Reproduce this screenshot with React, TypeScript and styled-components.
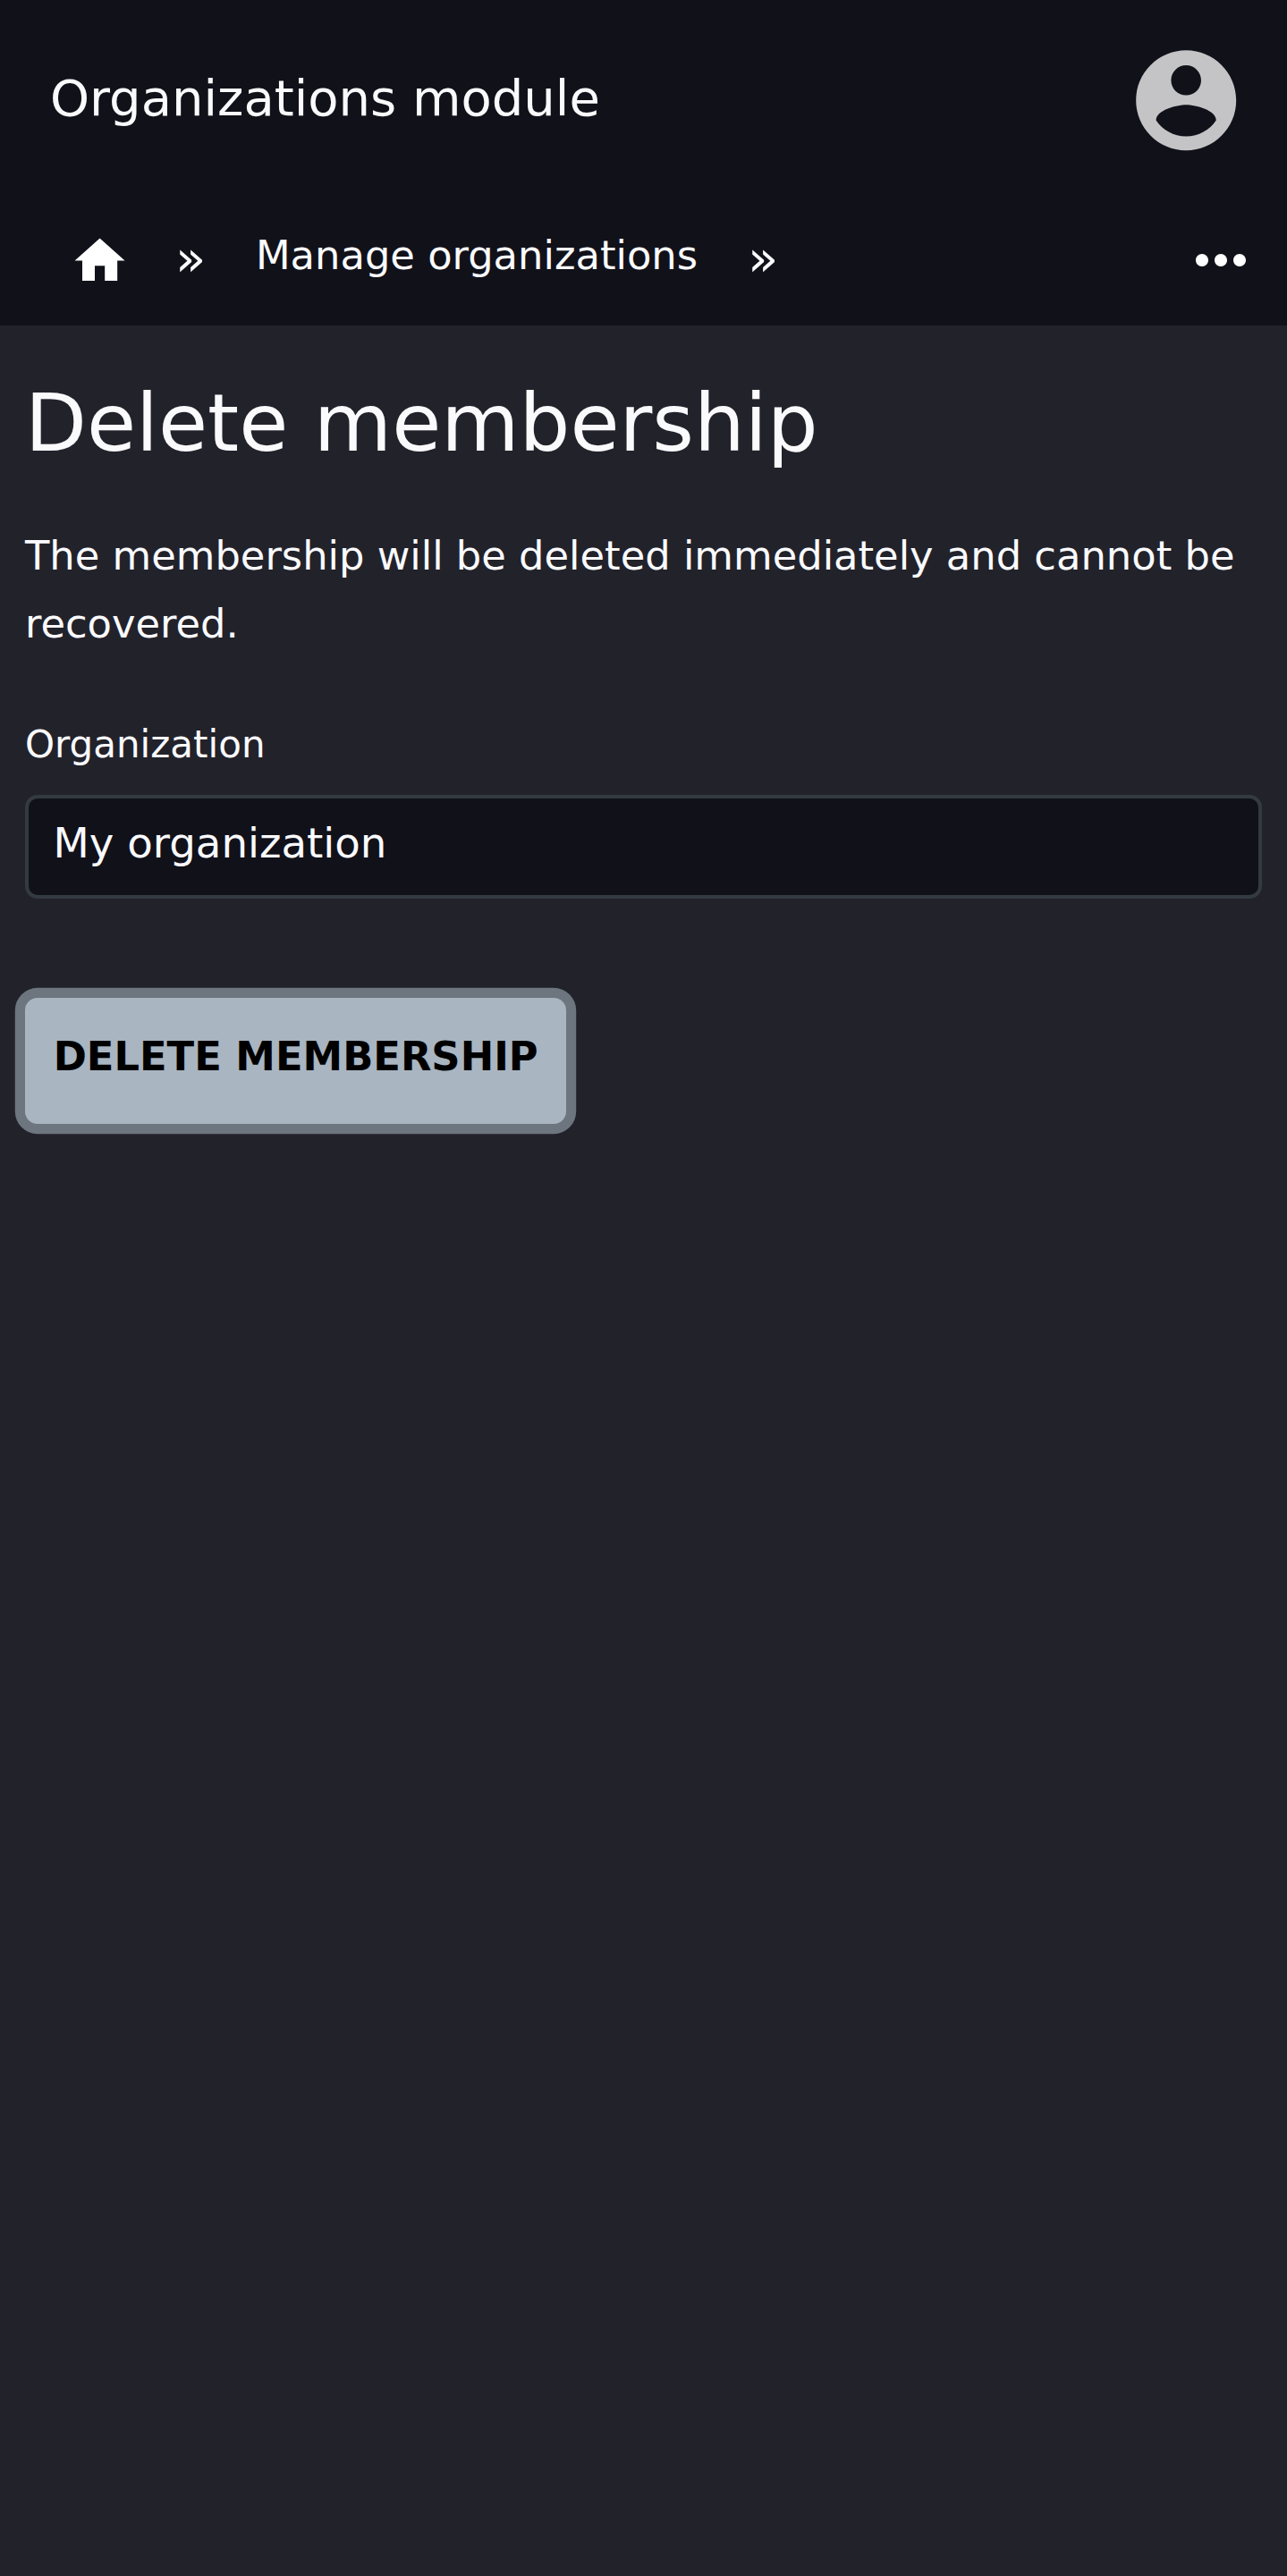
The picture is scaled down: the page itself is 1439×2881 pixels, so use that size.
import React from 'react';
import styled, { createGlobalStyle } from 'styled-components';

const GlobalStyle = createGlobalStyle`
  *, *::before, *::after { box-sizing: border-box; }
  html, body { margin: 0; background: #22222b; }
  body { color: #fafafd; font-family: 'DejaVu Sans', sans-serif; font-size: 44.8px; line-height: 76.8px; }
`;

const Page = styled.div`
  min-height: 2881px;
  display: flex;
  flex-direction: column;
`;

const Header = styled.header`
  height: 364px;
  background: #11111a;
  display: flex;
  flex-direction: column;
`;

const TitleBar = styled.div`
  height: 224px;
  padding: 0 45.2px 0 56px;
  display: flex;
  align-items: center;
  justify-content: space-between;
`;

const ModuleName = styled.span`
  padding-bottom: 5px;
  font-size: 56px;
  line-height: 84px;
`;

const Avatar = styled.svg`
  width: 134.4px;
  height: 134.4px;
  fill: #c4c4c6;
`;

const Breadcrumbs = styled.nav`
  height: 140px;
  padding: 0 32px 6px 78.4px;
  display: flex;
  align-items: center;
`;

const HomeIcon = styled.svg`
  width: 67.2px;
  height: 67.2px;
  margin-top: 1.8px;
  fill: #fff;
`;

const Separator = styled.span<{ $before: number }>`
  width: 34px;
  margin: 0 56px 0 ${({ $before }) => $before}px;
  padding-bottom: 5px;
  font-size: 56px;
  line-height: 84px;
`;

const Crumb = styled.a`
  padding-bottom: 9.6px;
  color: #fafafd;
  text-decoration: none;
`;

const MoreButton = styled.button`
  margin: 0 0 0.6px auto;
  padding: 0;
  border: 0;
  background: none;
  display: flex;
`;

const MoreIcon = styled.svg`
  width: 84px;
  height: 84px;
  fill: #fff;
`;

const Main = styled.main`
  padding: 55.5px 28px 0;
`;

const Heading = styled.h1`
  margin: 0 0 56.5px;
  font-size: 89.6px;
  font-weight: 400;
  line-height: 107.5px;
`;

const Notice = styled.p`
  margin: 0 0 58.2px;
`;

const Label = styled.label`
  display: block;
  margin-bottom: 17.7px;
  font-size: 42px;
  line-height: 76px;
`;

const Field = styled.input`
  display: block;
  width: 100%;
  height: 116px;
  margin: 0 0 111px;
  padding: 0 27.6px 8px;
  border: 4px solid #343a42;
  border-radius: 14px;
  outline: 0;
  background: #11111a;
  color: #fafafd;
  font: 400 46.67px 'DejaVu Sans', sans-serif;
`;

const DeleteButton = styled.button`
  display: block;
  height: 141px;
  padding: 0 31.7px 10px;
  border: 0;
  border-radius: 14px;
  background: #a9b5c1;
  box-shadow: 0 0 0 11.2px #6d757e;
  color: #000;
  font: 700 44.8px 'DejaVu Sans', sans-serif;
  text-transform: uppercase;
`;

export default function App() {
  return (
    <Page>
      <GlobalStyle />
      <Header>
        <TitleBar>
          <ModuleName>Organizations module</ModuleName>
          <Avatar viewBox="0 0 24 24">
            <path d="M12 2C6.48 2 2 6.48 2 12s4.48 10 10 10 10-4.48 10-10S17.52 2 12 2zm0 3c1.66 0 3 1.34 3 3s-1.34 3-3 3-3-1.34-3-3 1.34-3 3-3zm0 14.2c-2.5 0-4.71-1.28-6-3.22.03-1.99 4-3.08 6-3.08 1.99 0 5.97 1.09 6 3.08-1.29 1.94-3.5 3.22-6 3.22z" />
          </Avatar>
        </TitleBar>
        <Breadcrumbs>
          <HomeIcon viewBox="0 0 24 24">
            <path d="M10 20v-6h4v6h5v-8h3L12 3 2 12h3v8z" />
          </HomeIcon>
          <Separator $before={50.4}>»</Separator>
          <Crumb>Manage organizations</Crumb>
          <Separator $before={56}>»</Separator>
          <MoreButton aria-label="More">
            <MoreIcon viewBox="0 0 24 24">
              <path d="M6 10c-1.1 0-2 .9-2 2s.9 2 2 2 2-.9 2-2-.9-2-2-2zm12 0c-1.1 0-2 .9-2 2s.9 2 2 2 2-.9 2-2-.9-2-2-2zm-6 0c-1.1 0-2 .9-2 2s.9 2 2 2 2-.9 2-2-.9-2-2-2z" />
            </MoreIcon>
          </MoreButton>
        </Breadcrumbs>
      </Header>
      <Main>
        <Heading>Delete membership</Heading>
        <Notice>The membership will be deleted immediately and cannot be recovered.</Notice>
        <Label htmlFor="organization">Organization</Label>
        <Field id="organization" defaultValue="My organization" readOnly />
        <DeleteButton>Delete membership</DeleteButton>
      </Main>
    </Page>
  );
}
